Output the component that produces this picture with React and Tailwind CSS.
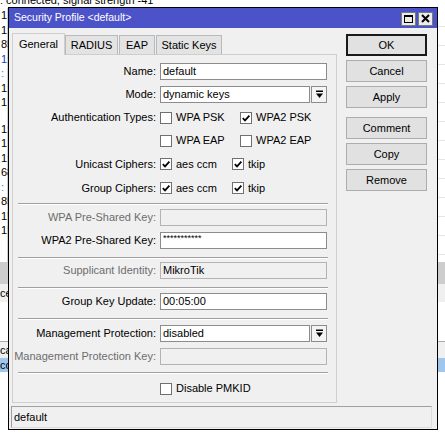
import React from 'react'

const leftRows = [
  { t: '1' }, { t: '1:' }, { t: '85' }, { t: '1:', c: 'text-[#1a3fb0]' }, { t: ':', c: 'text-[#2a8fd0]' },
  { t: '1:' }, { t: '1' }, { t: '' }, { t: '1:' }, { t: '1' }, { t: '1:' }, { t: '68' },
  { t: ':', c: 'text-[#2a8fd0]' }, { t: '85' }, { t: '1!' }, { t: '1!' }, { t: '' }, { t: '' },
]

function Check({ checked }) {
  return (
    <span className="w-[12px] h-[12px] border border-[#707070] bg-white flex items-center justify-center shrink-0">
      {checked && (
        <svg width="10" height="10" viewBox="0 0 10 10">
          <path d="M1.8 5.2 L4 7.4 L8.4 2.6" fill="none" stroke="#000" strokeWidth="1.7" />
        </svg>
      )}
    </span>
  )
}

function CheckItem({ checked, label, w }) {
  return (
    <div className={`flex items-center gap-[4px] ${w}`}>
      <Check checked={checked} />
      <span>{label}</span>
    </div>
  )
}

function Row({ label, disabled, children, h = 'h-[23px]' }) {
  return (
    <div className={`flex items-center ${h}`}>
      <div className={`w-[144px] text-right pr-[1px] whitespace-nowrap ${disabled ? 'text-[#6d6d6d]' : 'text-black'}`}>
        {label}
      </div>
      <div className="ml-[3px] flex items-center">{children}</div>
    </div>
  )
}

function Field({ value, disabled, w = 'w-[167px]' }) {
  return (
    <div
      className={`${w} h-[17px] border px-[2px] flex items-center leading-none ${
        disabled ? 'bg-[#f0f0f0] border-[#b4b4b4]' : 'bg-white border-[#8c8c8c]'
      }`}
    >
      {value}
    </div>
  )
}

function DropArrow() {
  return (
    <svg width="9" height="9" viewBox="0 0 9 9">
      <rect x="1" y="0.5" width="7" height="1.5" fill="#000" />
      <path d="M1 3.5 H8 L4.5 8 Z" fill="#000" />
    </svg>
  )
}

function Select({ value }) {
  return (
    <div className="flex gap-[1px]">
      <Field value={value} w="w-[150px]" />
      <div className="w-[16px] h-[17px] border border-[#8c8c8c] bg-[#f4f4f4] flex items-center justify-center">
        <DropArrow />
      </div>
    </div>
  )
}

function Sep({ m }) {
  return <div className={`${m} mr-[8px] ml-[5px] border-t border-t-[#a0a0a0] border-b border-b-white`} />
}

function Btn({ children, primary }) {
  return (
    <button
      type="button"
      className={`w-[81px] h-[22px] bg-[#e1e1e1] flex items-center justify-center ${
        primary ? 'border-2 border-[#1a1a1a]' : 'border border-[#adadad]'
      }`}
    >
      {children}
    </button>
  )
}

export default function App() {
  return (
    <div className="relative w-[445px] h-[446px] overflow-hidden bg-white text-[11px] text-black font-['Liberation_Sans',Arial,sans-serif]">
      {/* program behind the dialog */}
      <div className="absolute inset-0 flex flex-col">
        <div className="h-[8px] leading-[8px] whitespace-nowrap overflow-hidden">
          <span className="relative top-[-4px]">: connected, signal strength -41</span>
        </div>
        <div className="flex h-[254px]">
          <div className="w-[8px] flex flex-col border-r border-[#cfcfcf]">
            {leftRows.map((r, i) => (
              <div key={i} className={`h-[14.5px] leading-[14.5px] pl-[1px] whitespace-nowrap ${r.c || ''}`}>
                {r.t}
              </div>
            ))}
          </div>
          <div className="flex-1 flex flex-col">
            {Array.from({ length: 13 }).map((_, i) => (
              <div key={i} className="h-[19px] border-b border-[#e6e6e6]" />
            ))}
          </div>
        </div>
        <div className="h-[22px] bg-[#cdcdcd]" />
        <div className="h-[58px] border-b border-[#a8a8a8] flex flex-col">
          <div className="h-[18px] bg-[#f0f0f0] leading-[18px] pl-[0px]">ce</div>
        </div>
        <div className="h-[16px] leading-[16px] bg-[#f0f0f0]">ca</div>
        <div className="h-[14px] leading-[14px] bg-[#9fc6ef]">cc</div>
      </div>

      {/* dialog window */}
      <div className="absolute left-[8px] top-[7px] w-[430px] h-[423px] border border-black bg-[#f0f0f0] flex flex-col">
        <div className="h-[20px] bg-[#4c52c8] flex items-center justify-between pl-[5px] pr-[4px]">
          <span className="text-white text-[10.5px]">Security Profile &lt;default&gt;</span>
          <div className="flex gap-[2px] mt-[1px]">
            <div className="w-[15px] h-[14px] bg-[#ececec] border border-[#7a7a7a] flex items-center justify-center">
              <span className="w-[9px] h-[8px] border border-black border-t-2" />
            </div>
            <div className="w-[15px] h-[14px] bg-[#ececec] border border-[#7a7a7a] flex items-center justify-center">
              <svg width="9" height="9" viewBox="0 0 9 9">
                <path d="M1 1 L8 8 M8 1 L1 8" stroke="#000" strokeWidth="2" />
              </svg>
            </div>
          </div>
        </div>

        <div className="flex pl-[3px] pt-[5px] gap-[9px]">
          <div className="w-[325px] flex flex-col">
            <div className="flex items-end h-[22px] relative z-10 mb-[-1px]">
              <div className="w-[53px] h-[22px] bg-[#f0f0f0] border border-b-0 border-[#cfcfcf] flex items-center justify-center pb-[1px]">
                General
              </div>
              <div className="w-[53px] h-[20px] bg-[#e3e3e3] border border-[#b9b9b9] border-b-[#cfcfcf] flex items-center justify-center">
                RADIUS
              </div>
              <div className="w-[36px] h-[20px] ml-[1px] bg-[#e3e3e3] border border-[#b9b9b9] border-b-[#cfcfcf] flex items-center justify-center">
                EAP
              </div>
              <div className="w-[66px] h-[20px] ml-[1px] bg-[#e3e3e3] border border-[#b9b9b9] border-b-[#cfcfcf] flex items-center justify-center">
                Static Keys
              </div>
            </div>
            <div className="h-[349px] border border-[#cfcfcf] flex flex-col pt-[5px]">
              <Row label="Name:">
                <Field value="default" />
              </Row>
              <Row label="Mode:">
                <Select value="dynamic keys" />
              </Row>
              <Row label="Authentication Types:">
                <CheckItem label="WPA PSK" w="w-[80px]" />
                <CheckItem checked label="WPA2 PSK" />
              </Row>
              <Row label="">
                <CheckItem label="WPA EAP" w="w-[80px]" />
                <CheckItem label="WPA2 EAP" />
              </Row>
              <Row label="Unicast Ciphers:" h="h-[24px]">
                <CheckItem checked label="aes ccm" w="w-[72px]" />
                <CheckItem checked label="tkip" />
              </Row>
              <Row label="Group Ciphers:" h="h-[24px]">
                <CheckItem checked label="aes ccm" w="w-[72px]" />
                <CheckItem checked label="tkip" />
              </Row>
              <Sep m="mt-[3px] mb-[1px]" />
              <Row label="WPA Pre-Shared Key:" disabled>
                <Field value="" disabled />
              </Row>
              <Row label="WPA2 Pre-Shared Key:">
                <Field value={<span className="text-[9px] leading-none relative top-[-2px]">***********</span>} />
              </Row>
              <Sep m="mt-[5px]" />
              <Row label="Supplicant Identity:" disabled>
                <Field value="MikroTik" disabled />
              </Row>
              <Sep m="mt-[5px] mb-[1px]" />
              <Row label="Group Key Update:">
                <Field value="00:05:00" />
              </Row>
              <Sep m="mt-[5px] mb-[2px]" />
              <Row label="Management Protection:">
                <Select value="disabled" />
              </Row>
              <Row label="Management Protection Key:" disabled>
                <Field value="" disabled />
              </Row>
              <Sep m="mt-[4px]" />
              <Row label="" h="h-[23px] mt-[3px]">
                <CheckItem label="Disable PMKID" />
              </Row>
            </div>
          </div>

          <div className="flex flex-col pt-[1px]">
            <Btn primary>OK</Btn>
            <div className="mt-[4px]"><Btn>Cancel</Btn></div>
            <div className="mt-[4px]"><Btn>Apply</Btn></div>
            <div className="mt-[9px]"><Btn>Comment</Btn></div>
            <div className="mt-[4px]"><Btn>Copy</Btn></div>
            <div className="mt-[4px]"><Btn>Remove</Btn></div>
          </div>
        </div>

        <div className="mt-[3px] ml-[2px] mr-[5px] h-[22px] border border-[#a0a0a0] border-r-[#dcdcdc] border-b-[#dcdcdc] flex items-center pl-[2px]">
          default
        </div>
      </div>
    </div>
  )
}
